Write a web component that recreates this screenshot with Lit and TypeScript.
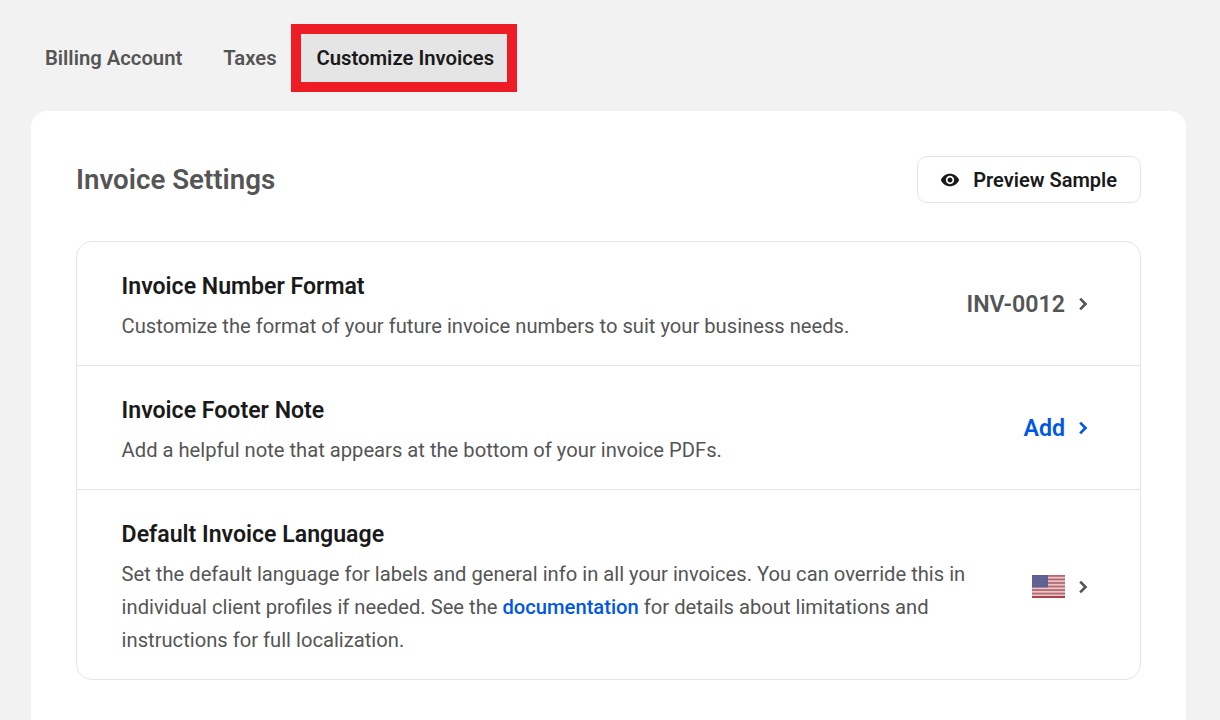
import { LitElement, css, html, svg } from "lit";
import { customElement } from "lit/decorators.js";

const chevron = html`<svg class="chev" viewBox="0 0 24 24" aria-hidden="true">
  <path d="M8.6 5.6 15 12l-6.4 6.4" fill="none" stroke="currentColor" stroke-width="3.2" />
</svg>`;

const eye = html`<svg class="eye" viewBox="0 0 24 24" aria-hidden="true">
  <path
    fill="currentColor"
    d="M12 4.5C7 4.5 2.73 7.61 1 12c1.73 4.39 6 7.5 11 7.5s9.27-3.11 11-7.5c-1.73-4.39-6-7.5-11-7.5zM12 17c-2.76 0-5-2.24-5-5s2.24-5 5-5 5 2.24 5 5-2.24 5-5 5zm0-8c-1.66 0-3 1.34-3 3s1.34 3 3 3 3-1.34 3-3-1.34-3-3-3z"
  />
</svg>`;

const stripes = [0, 2, 4, 6, 8, 10, 12];

const flag = html`<svg class="flag" viewBox="0 0 33 23" preserveAspectRatio="none" aria-hidden="true">
  <rect width="33" height="23" fill="#e2c8c9" />
  ${stripes.map(
    (i) => svg`<rect y=${(i * 23) / 13} width="33" height=${23 / 13} fill="#bb6570" />`,
  )}
  <rect y="21.2" width="33" height="1.8" fill="#a93c46" />
  <rect width="16" height="12.4" fill="#5d6090" />
  <g fill="#71749c">
    <circle cx="3" cy="2.5" r="0.7" />
    <circle cx="7" cy="2.5" r="0.7" />
    <circle cx="11" cy="2.5" r="0.7" />
    <circle cx="5" cy="6" r="0.7" />
    <circle cx="9" cy="6" r="0.7" />
    <circle cx="13" cy="6" r="0.7" />
    <circle cx="3" cy="9.5" r="0.7" />
    <circle cx="7" cy="9.5" r="0.7" />
    <circle cx="11" cy="9.5" r="0.7" />
  </g>
</svg>`;

@customElement("app-root")
export class AppRoot extends LitElement {
  static styles = css`
    :host {
      display: block;
      height: 720px;
      overflow: hidden;
      background: #f2f2f2;
      font-family: Roboto, "Liberation Sans", sans-serif;
      color: #555;
    }
    .tabs {
      display: flex;
      gap: 9px;
      padding: 34px 0 29px 29px;
    }
    .tab {
      position: relative;
      padding: 0 16px;
      height: 48px;
      line-height: 48px;
      font-size: 20.25px;
      font-weight: 600;
      color: #555;
    }
    .tab.active {
      margin-left: -1px;
      background: #e5e5e5;
      color: #1a1a1a;
      border-radius: 6px;
    }
    .highlight {
      position: absolute;
      inset: -10px -7px -10px -10px;
      border: 10px solid #ee1c25;
    }
    .card {
      margin: 0 34px 0 31px;
      padding: 45px;
      height: 640px;
      box-sizing: border-box;
      background: #fff;
      border-radius: 16px;
    }
    .head {
      display: flex;
      align-items: center;
      justify-content: space-between;
      margin-bottom: 38px;
    }
    h2 {
      margin: 0;
      font-size: 27.7px;
      font-weight: 600;
      color: #555;
    }
    .preview {
      display: flex;
      align-items: center;
      gap: 13px;
      box-sizing: border-box;
      height: 47px;
      padding: 0 23px 0 22px;
      border: 1px solid #e5e5e5;
      border-radius: 10px;
      font-size: 20px;
      font-weight: 600;
      color: #1a1a1a;
    }
    .eye {
      width: 20px;
      height: 20px;
    }
    .list {
      border: 1px solid #e5e5e5;
      border-radius: 16px;
    }
    .row {
      display: flex;
      align-items: center;
      justify-content: space-between;
      padding: 29px 47px 22px 44.6px;
    }
    .row + .row {
      border-top: 1px solid #e5e5e5;
    }
    .title {
      font-size: 23.1px;
      line-height: 32px;
      font-weight: 600;
      color: #1a1a1a;
    }
    .desc {
      margin-top: 7px;
      max-width: 860px;
      font-size: 20.18px;
      line-height: 33px;
      color: #555;
    }
    a {
      color: #0057e7;
      font-weight: 500;
      text-decoration: none;
    }
    .value {
      display: flex;
      align-items: center;
      gap: 8px;
      margin-bottom: 7px;
      font-size: 23.2px;
      font-weight: 600;
      color: #555;
    }
    .value.add {
      color: #0057e7;
    }
    .value.lang {
      margin-bottom: 3px;
    }
    .chev {
      width: 20px;
      height: 20px;
      color: #555;
    }
    .add .chev {
      color: #0057e7;
    }
    .flag {
      display: block;
      width: 33px;
      height: 23px;
      filter: blur(0.3px);
    }
  `;

  render() {
    return html`
      <nav class="tabs">
        <div class="tab">Billing Account</div>
        <div class="tab">Taxes</div>
        <div class="tab active">Customize Invoices<span class="highlight"></span></div>
      </nav>
      <main class="card">
        <div class="head">
          <h2>Invoice Settings</h2>
          <div class="preview">${eye}Preview Sample</div>
        </div>
        <section class="list">
          <div class="row">
            <div>
              <div class="title">Invoice Number Format</div>
              <div class="desc">Customize the format of your future invoice numbers to suit your business needs.</div>
            </div>
            <div class="value">INV-0012 ${chevron}</div>
          </div>
          <div class="row">
            <div>
              <div class="title">Invoice Footer Note</div>
              <div class="desc">Add a helpful note that appears at the bottom of your invoice PDFs.</div>
            </div>
            <div class="value add">Add ${chevron}</div>
          </div>
          <div class="row">
            <div>
              <div class="title">Default Invoice Language</div>
              <div class="desc">
                Set the default language for labels and general info in all your invoices. You can override this in
                individual client profiles if needed. See the <a href="#">documentation</a> for details about
                limitations and instructions for full localization.
              </div>
            </div>
            <div class="value lang">${flag} ${chevron}</div>
          </div>
        </section>
      </main>
    `;
  }
}
